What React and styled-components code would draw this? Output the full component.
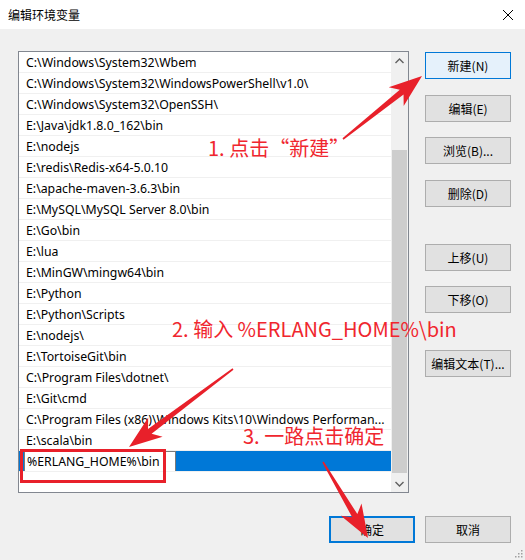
import React from 'react'
import styled, { createGlobalStyle } from 'styled-components'

const GlobalStyle = createGlobalStyle`
  html, body {
    margin: 0;
    padding: 0;
    background: #f0f0f0;
  }
  * { box-sizing: border-box; }
`

const LIST_FONT = `"Noto Sans", "Noto Sans CJK SC", sans-serif`
const CJK_FONT = `"Noto Sans CJK SC", "Noto Sans", sans-serif`

const Window = styled.div`
  position: relative;
  width: 525px;
  height: 560px;
  background: #f0f0f0;
  font-family: ${CJK_FONT};
  font-size: 12px;
  color: #000;
  overflow: hidden;
`

const TitleBar = styled.div`
  height: 29px;
  background: #fff;
  display: flex;
  align-items: center;
  justify-content: space-between;
  padding: 0 10px 0 8px;
`

const Title = styled.div`
  font-size: 12px;
  color: #000;
`

const CloseIcon = styled.svg`
  width: 12px;
  height: 12px;
  margin-right: 1px;
`

const Body = styled.div`
  display: grid;
  grid-template-columns: 391px 86px;
  column-gap: 16px;
  padding: 22px 0 0 18px;
`

const ListBox = styled.div`
  height: 442px;
  border: 1px solid #828790;
  background: #fff;
  display: flex;
`

const Rows = styled.div`
  flex: 1;
  min-width: 0;
  display: flex;
  flex-direction: column;
`

const Row = styled.div`
  height: 21px;
  display: flex;
  align-items: center;
  padding: 0 2px 0 7px;
  border-bottom: 1px solid #f0f0f0;
  white-space: nowrap;
  overflow: hidden;
  font-family: ${LIST_FONT};
  font-size: 12.3px;
  background: ${p => (p.$selected ? '#0078d7' : '#fff')};
`

const EditBox = styled.div`
  width: 152px;
  height: 21px;
  margin-left: -2px;
  background: #fff;
  border: 1px solid #7a7a7a;
  display: flex;
  align-items: center;
  padding-left: 2px;
  overflow: hidden;
`

const ScrollBar = styled.div`
  width: 17px;
  background: #f0f0f0;
  display: flex;
  flex-direction: column;
`

const ScrollArrow = styled.div`
  height: 17px;
  display: flex;
  align-items: center;
  justify-content: center;
`

const ScrollTrack = styled.div`
  flex: 1;
  display: flex;
  flex-direction: column;
  padding: 81px 1px 2px 1px;
`

const Thumb = styled.div`
  flex: 1;
  background: #cdcdcd;
`

const ButtonColumn = styled.div`
  display: flex;
  flex-direction: column;
  padding-top: 1px;
`

const Button = styled.button`
  width: 86px;
  height: 27px;
  margin-top: ${p => p.$gap || 0}px;
  padding: 0;
  font-family: ${CJK_FONT};
  font-size: 12px;
  color: #000;
  background: ${p => (p.$hover ? '#e5f1fb' : '#e1e1e1')};
  border: ${p => (p.$default ? '2px' : '1px')} solid
    ${p => (p.$hover || p.$default ? '#0078d7' : '#adadad')};
  cursor: default;
`

const Footer = styled.div`
  display: flex;
  justify-content: flex-end;
  gap: 10px;
  padding: 23px 14px 0 0;
`

const Grip = styled.svg`
  position: absolute;
  right: 2px;
  bottom: 2px;
`

const Overlay = styled.svg`
  position: absolute;
  left: 0;
  top: 0;
  pointer-events: none;
`

const Note = styled.div`
  position: absolute;
  left: ${p => p.$x}px;
  top: ${p => p.$y}px;
  font-family: ${CJK_FONT};
  font-size: 20px;
  line-height: 20px;
  color: #f0262e;
  white-space: nowrap;
`

const Highlight = styled.div`
  position: absolute;
  left: 20px;
  top: 449px;
  width: 146px;
  height: 34px;
  border: 3px solid #e8202a;
`

const paths = [
  'C:\\Windows\\System32\\Wbem',
  'C:\\Windows\\System32\\WindowsPowerShell\\v1.0\\',
  'C:\\Windows\\System32\\OpenSSH\\',
  'E:\\Java\\jdk1.8.0_162\\bin',
  'E:\\nodejs',
  'E:\\redis\\Redis-x64-5.0.10',
  'E:\\apache-maven-3.6.3\\bin',
  'E:\\MySQL\\MySQL Server 8.0\\bin',
  'E:\\Go\\bin',
  'E:\\lua',
  'E:\\MinGW\\mingw64\\bin',
  'E:\\Python',
  'E:\\Python\\Scripts',
  'E:\\nodejs\\',
  'E:\\TortoiseGit\\bin',
  'C:\\Program Files\\dotnet\\',
  'E:\\Git\\cmd',
  'C:\\Program Files (x86)\\Windows Kits\\10\\Windows Performan...',
  'E:\\scala\\bin',
]

// arrow polygon from tail to tip, shaft tapering from thin to thick
const arrowPoints = (tail, tip, headLen, headW, shaftW) => {
  const dx = tip[0] - tail[0]
  const dy = tip[1] - tail[1]
  const len = Math.hypot(dx, dy)
  const ux = dx / len
  const uy = dy / len
  const nx = -uy
  const ny = ux
  const bx = tip[0] - ux * headLen
  const by = tip[1] - uy * headLen
  const pts = [
    [tail[0] + nx * 0.8, tail[1] + ny * 0.8],
    [bx + nx * shaftW / 2 + ux * 4, by + ny * shaftW / 2 + uy * 4],
    [bx + nx * headW / 2 - ux * 3, by + ny * headW / 2 - uy * 3],
    tip,
    [bx - nx * headW / 2 - ux * 3, by - ny * headW / 2 - uy * 3],
    [bx - nx * shaftW / 2 + ux * 4, by - ny * shaftW / 2 + uy * 4],
    [tail[0] - nx * 0.8, tail[1] - ny * 0.8],
  ]
  return pts.map(p => p.join(',')).join(' ')
}

const arrows = [
  { tail: [343, 139], tip: [422, 76] },
  { tail: [233, 369], tip: [129, 447] },
  { tail: [323, 462], tip: [368, 538] },
]

const App = () => {
  return (
    <>
      <GlobalStyle />
      <Window>
        <TitleBar>
          <Title>编辑环境变量</Title>
          <CloseIcon viewBox="0 0 12 12">
            <path d="M1 1 L11 11 M11 1 L1 11" stroke="#000" strokeWidth="1" />
          </CloseIcon>
        </TitleBar>
        <Body>
          <div>
            <ListBox>
              <Rows>
                {paths.map(p => (
                  <Row key={p}>{p}</Row>
                ))}
                <Row $selected>
                  <EditBox>%ERLANG_HOME%\bin</EditBox>
                </Row>
              </Rows>
              <ScrollBar>
                <ScrollArrow>
                  <svg width="9" height="6" viewBox="0 0 9 6">
                    <path d="M0.5 5 L4.5 1 L8.5 5" stroke="#606060" strokeWidth="1.4" fill="none" />
                  </svg>
                </ScrollArrow>
                <ScrollTrack>
                  <Thumb />
                </ScrollTrack>
                <ScrollArrow>
                  <svg width="9" height="6" viewBox="0 0 9 6">
                    <path d="M0.5 1 L4.5 5 L8.5 1" stroke="#606060" strokeWidth="1.4" fill="none" />
                  </svg>
                </ScrollArrow>
              </ScrollBar>
            </ListBox>
          </div>
          <ButtonColumn>
            <Button $hover>新建(N)</Button>
            <Button $gap={16}>编辑(E)</Button>
            <Button $gap={15}>浏览(B)...</Button>
            <Button $gap={16}>删除(D)</Button>
            <Button $gap={37}>上移(U)</Button>
            <Button $gap={15}>下移(O)</Button>
            <Button $gap={37}>编辑文本(T)...</Button>
          </ButtonColumn>
        </Body>
        <Footer>
          <Button $default>确定</Button>
          <Button>取消</Button>
        </Footer>
        <Grip width="10" height="10" viewBox="0 0 10 10">
          {[[8, 2], [5, 5], [8, 5], [2, 8], [5, 8], [8, 8]].map(([x, y]) => (
            <rect key={`${x}-${y}`} x={x} y={y} width="1.5" height="1.5" fill="#a0a0a0" />
          ))}
        </Grip>

        <Highlight />
        <Note $x={208} $y={138}>1. 点击“新建”</Note>
        <Note $x={172} $y={319}>2. 输入 %ERLANG_HOME%\bin</Note>
        <Note $x={243} $y={426}>3. 一路点击确定</Note>
        <Overlay width="525" height="560">
          {arrows.map((a, i) => (
            <polygon key={i} points={arrowPoints(a.tail, a.tip, 30, 24, 6)} fill="#e8202a" />
          ))}
        </Overlay>
      </Window>
    </>
  )
}

export default App
